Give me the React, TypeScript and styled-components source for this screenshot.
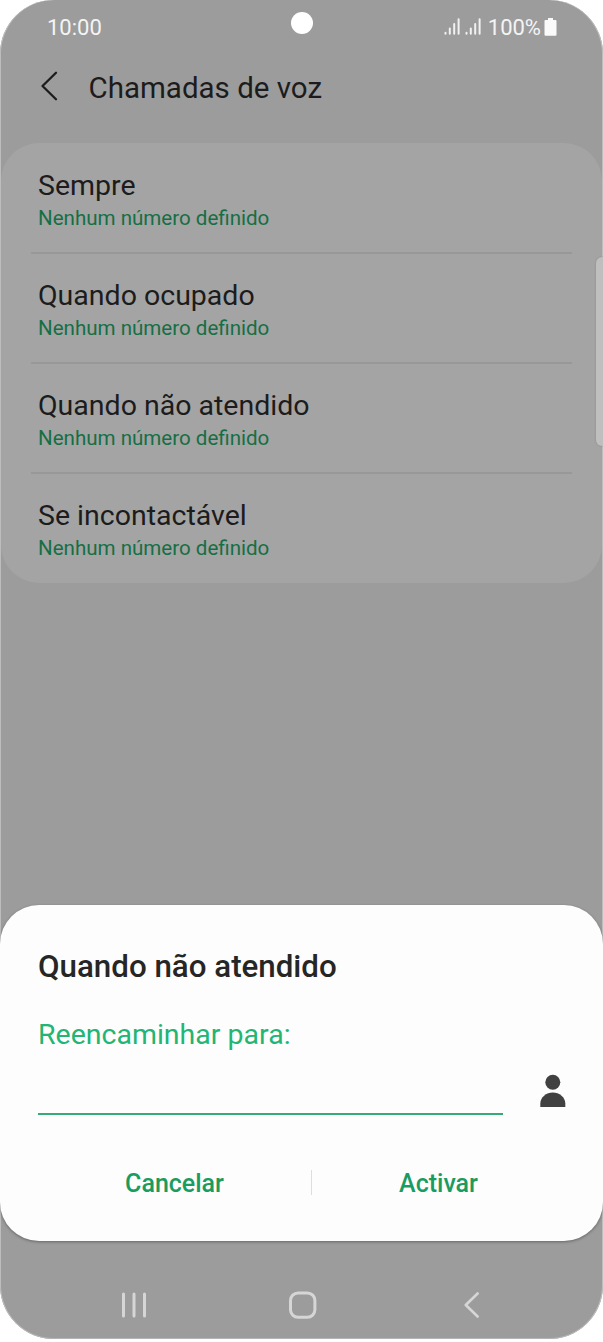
import React from 'react';
import styled, { createGlobalStyle } from 'styled-components';

const GlobalStyle = createGlobalStyle`
  html, body { margin: 0; padding: 0; background: #fff; }
  * { box-sizing: border-box; }
  body { font-family: Roboto, sans-serif; overflow: hidden; }
  svg { display: block; flex: none; }
`;

const Phone = styled.main`
  width: 603px;
  height: 1339px;
  display: flex;
  flex-direction: column;
  background: #9c9c9c;
  border-radius: 54px;
  box-shadow: inset 1px 0 0 #bdbdbd, inset -1px 0 0 #bdbdbd, inset 0 -1px 0 #b4b4b4;
  position: relative;
`;

const StatusBar = styled.header`
  height: 54px;
  flex: none;
  display: grid;
  grid-template-columns: 1fr 22px 1fr;
  align-items: center;
  padding: 0 46px 0 47px;
  color: #f4f4f4;
`;

const Clock = styled.span`
  padding-top: 2px;
  font-size: 22px;
  line-height: 28px;
`;

const Camera = styled.span`
  width: 22px;
  height: 22px;
  margin-bottom: 8px;
  border-radius: 50%;
  background: #fff;
`;

const StatusIcons = styled.div`
  display: flex;
  align-items: center;
  justify-content: flex-end;
`;

const Percent = styled.span`
  padding-top: 2px;
  font-size: 22px;
  line-height: 28px;
  margin: 0 3px 0 2px;
`;

const TitleBar = styled.div`
  height: 89px;
  flex: none;
  display: flex;
  align-items: flex-start;
  padding: 16px 0 0 40px;
`;

const PageTitle = styled.h1`
  margin: 1px 0 0 30.5px;
  font-size: 29.5px;
  font-weight: 400;
  line-height: 34px;
  color: #1c1c1c;
`;

const Options = styled.ul`
  list-style: none;
  margin: 0 1px;
  padding: 1px 0 0;
  flex: none;
  background: #a4a4a4;
  border-radius: 38px;
`;

const Option = styled.li`
  height: 110px;
  margin: 0 30px;
  padding: 25px 7px 0;
  border-bottom: 2px solid #989898;
  &:last-child {
    height: 109px;
    border-bottom: 0;
  }
`;

const OptionName = styled.div`
  font-size: 28.5px;
  line-height: 34px;
  color: #1c1c1c;
`;

const OptionValue = styled.div`
  margin-top: 2px;
  font-size: 20.55px;
  line-height: 26px;
  color: #156f45;
`;

const EdgeHandle = styled.span`
  position: absolute;
  right: 0;
  top: 257px;
  width: 7px;
  height: 189px;
  border-radius: 6px 0 0 6px;
  background: #bfbfbf;
  box-shadow: 0 0 2px #858585;
`;

const Dialog = styled.section`
  height: 336px;
  flex: none;
  margin-top: auto;
  padding: 43px 37px 0 38px;
  background: #fdfdfd;
  border-radius: 39px;
  box-shadow: 0 1px 3px rgba(0, 0, 0, 0.35);
`;

const DialogTitle = styled.h2`
  margin: 0;
  font-size: 31.3px;
  font-weight: 500;
  line-height: 38px;
  color: #262626;
`;

const FieldRow = styled.div`
  display: flex;
  justify-content: space-between;
  align-items: flex-end;
  margin-top: 32px;
`;

const Field = styled.div`
  width: 465px;
  height: 97px;
  border-bottom: 2px solid #35ab7a;
`;

const FieldLabel = styled.div`
  font-size: 28.5px;
  line-height: 34px;
  color: #22b573;
`;

const ContactButton = styled.span`
  margin-bottom: 7px;
`;

const Actions = styled.div`
  display: flex;
  align-items: center;
  margin-top: 52px;
  height: 34px;
`;

const Action = styled.span<{ $width: number }>`
  width: ${(p) => p.$width}px;
  flex: none;
  text-align: center;
  font-size: 25px;
  font-weight: 500;
  line-height: 34px;
  color: #1a9c60;
`;

const ActionDivider = styled.span`
  width: 1px;
  height: 25px;
  margin-bottom: 4px;
  background: #dedede;
`;

const NavBar = styled.nav`
  height: 98px;
  flex: none;
  display: grid;
  grid-template-columns: 168px 175px 17px;
  align-items: center;
  padding: 30px 0 0 121px;
`;

const SignalIcon = () => (
  <svg width="21" height="18" viewBox="0 0 21 18" stroke="#f1f1f1" strokeWidth="2" strokeLinecap="round">
    <path d="M1.5 14.7V15.8M5.8 10.5V15.8M10.2 6V15.8M14.6 1.3V15.8" />
  </svg>
);

const BatteryIcon = () => (
  <svg width="13" height="19" viewBox="0 0 13 19" fill="#fafafa">
    <path d="M4 0H9V2H11.5Q12.5 2 12.5 3V16.8Q12.5 17.8 11.5 17.8H1.5Q.5 17.8 .5 16.8V3Q.5 2 1.5 2H4Z" />
  </svg>
);

const HeaderBackIcon = () => (
  <svg width="18" height="32" viewBox="0 0 18 32" fill="none" stroke="#1c1c1c" strokeWidth="2.3" strokeLinecap="round" strokeLinejoin="round">
    <path d="M16 2.8L2.5 16L16 29.2" />
  </svg>
);

const PersonIcon = () => (
  <svg width="26" height="34" viewBox="0 0 26 34" fill="#414141">
    <circle cx="12.8" cy="8.2" r="7.5" />
    <path d="M.3 33V29.5C.3 23.4 6.3 18.5 12.8 18.5S25.3 23.4 25.3 29.5V33Z" />
  </svg>
);

const RecentsIcon = () => (
  <svg width="26" height="28" viewBox="0 0 26 28" stroke="#d6d6d6" strokeWidth="3" strokeLinecap="round">
    <path d="M2.5 3V25M13 3V25M23.5 3V25" />
  </svg>
);

const HomeIcon = () => (
  <svg width="28" height="28" viewBox="0 0 28 28" fill="none" stroke="#d6d6d6" strokeWidth="3">
    <rect x="1.5" y="1.9" width="24.4" height="24.4" rx="7.5" />
  </svg>
);

const NavBackIcon = () => (
  <svg width="17" height="28" viewBox="0 0 17 28" fill="none" stroke="#d6d6d6" strokeWidth="2.6" strokeLinecap="round" strokeLinejoin="round">
    <path d="M13.6 2.5L1.8 14L13.6 25.5" />
  </svg>
);

const options = ['Sempre', 'Quando ocupado', 'Quando não atendido', 'Se incontactável'];

export default function App() {
  return (
    <>
      <GlobalStyle />
      <Phone>
        <StatusBar>
          <Clock>10:00</Clock>
          <Camera />
          <StatusIcons>
            <SignalIcon />
            <SignalIcon />
            <Percent>100%</Percent>
            <BatteryIcon />
          </StatusIcons>
        </StatusBar>
        <TitleBar>
          <HeaderBackIcon />
          <PageTitle>Chamadas de voz</PageTitle>
        </TitleBar>
        <Options>
          {options.map((name) => (
            <Option key={name}>
              <OptionName>{name}</OptionName>
              <OptionValue>Nenhum número definido</OptionValue>
            </Option>
          ))}
        </Options>
        <Dialog>
          <DialogTitle>Quando não atendido</DialogTitle>
          <FieldRow>
            <Field>
              <FieldLabel>Reencaminhar para:</FieldLabel>
            </Field>
            <ContactButton>
              <PersonIcon />
            </ContactButton>
          </FieldRow>
          <Actions>
            <Action $width={273}>Cancelar</Action>
            <ActionDivider />
            <Action $width={253}>Activar</Action>
          </Actions>
        </Dialog>
        <NavBar>
          <RecentsIcon />
          <HomeIcon />
          <NavBackIcon />
        </NavBar>
        <EdgeHandle />
      </Phone>
    </>
  );
}
